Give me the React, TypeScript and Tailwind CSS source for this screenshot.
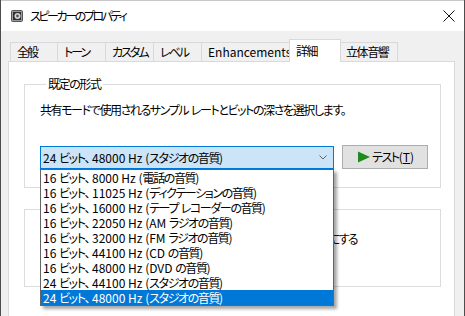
import React from "react";

const options = [
  "16 ビット、8000 Hz (電話の音質)",
  "16 ビット、11025 Hz (ディクテーションの音質)",
  "16 ビット、16000 Hz (テープ レコーダーの音質)",
  "16 ビット、22050 Hz (AM ラジオの音質)",
  "16 ビット、32000 Hz (FM ラジオの音質)",
  "16 ビット、44100 Hz (CD の音質)",
  "16 ビット、48000 Hz (DVD の音質)",
  "24 ビット、44100 Hz (スタジオの音質)",
  "24 ビット、48000 Hz (スタジオの音質)",
];

const tabs = [
  { label: "全般", w: "w-[47px]" },
  { label: "トーン", w: "w-[48px]" },
  { label: "カスタム", w: "w-[48px]" },
  { label: "レベル", w: "w-[48px]" },
  { label: "Enhancements", w: "w-[88px]" },
];

// Japanese runs are tightened, ASCII runs keep normal spacing
function T({ s, tight = "tracking-[-1.4px]" }: { s: string; tight?: string }) {
  const parts = s.split(/([\x20-\x7e]+|、)/).filter((p) => p !== "");
  return (
    <>
      {parts.map((p, i) => {
        if (p === "、") {
          return (
            <span key={i} className="tracking-[1.5px]">
              {p}
            </span>
          );
        }
        return /^[\x20-\x7e]+$/.test(p) ? (
          <span key={i} className="tracking-normal">
            {p}
          </span>
        ) : (
          <span key={i} className={tight}>
            {p}
          </span>
        );
      })}
    </>
  );
}

function Checkbox({ label }: { label: string }) {
  return (
    <div className="flex items-center h-[16px] gap-[4px]">
      <span className="w-[13px] h-[13px] border border-[#333333] bg-white shrink-0" />
      <span className="whitespace-nowrap">
        <T s={label} tight="tracking-[-1.6px]" />
      </span>
    </div>
  );
}

export default function App() {
  return (
    <div className="relative w-[465px] h-[316px] overflow-hidden bg-[#f0f0f0] border-x border-[#4d4d4d] text-[12px] leading-[16px] text-black font-['Noto_Sans_CJK_JP',sans-serif] [font-feature-settings:'palt']">
      {/* Title bar */}
      <div className="h-[31px] bg-white border-t border-[#c8c8c8] flex items-center">
        <svg width="12" height="12" viewBox="0 0 12 12" className="ml-[10px]">
          <rect x="0.5" y="0.5" width="11" height="11" rx="1" fill="#9a9a9a" stroke="#555" />
          <rect x="2" y="2" width="8" height="8" fill="#2e2e2e" />
          <circle cx="6.5" cy="6" r="3" fill="#d8d8d8" />
          <circle cx="6.5" cy="6" r="1.4" fill="#555" />
        </svg>
        <span className="ml-[7px]">
          <T s="スピーカーのプロパティ" tight="tracking-[-2.4px]" />
        </span>
        <svg width="12" height="12" viewBox="0 0 12 12" className="ml-auto mr-[9px]">
          <path d="M0.5 0.5L11.5 11.5M11.5 0.5L0.5 11.5" stroke="#111" strokeWidth="1" />
        </svg>
      </div>

      {/* Tabs */}
      <div className="mt-[8px] h-[22px] flex items-end pl-[9px]">
        {tabs.map((t) => (
          <div
            key={t.label}
            className={`${t.w} h-[19px] border-t border-l border-[#d9d9d9] bg-[#f0f0f0] pl-[6px] flex items-center whitespace-nowrap`}
          >
            <T s={t.label} tight="tracking-[-2px]" />
          </div>
        ))}
        <div className="relative z-10 w-[52px] h-[23px] -mb-px border-t border-x border-[#d9d9d9] bg-white pl-[6px] flex items-start pt-[3px]">
          <T s="詳細" />
        </div>
        <div className="w-[57px] h-[19px] border-t border-r border-[#d9d9d9] bg-[#f0f0f0] pl-[5px] flex items-center whitespace-nowrap">
          <T s="立体音響" />
        </div>
      </div>

      {/* Tab page */}
      <div className="ml-[7px] w-[447px] h-[300px] border border-[#d9d9d9] bg-white">
        <fieldset className="mt-[14px] ml-[15px] w-[417px] border border-[#dcdcdc] pl-[15px] pt-[10px] pb-[18px]">
          <legend className="ml-[6px] px-[2px] leading-[16px]">
            <T s="既定の形式" />
          </legend>
          <div className="whitespace-nowrap">
            <T s="共有モードで使用されるサンプル レートとビットの深さを選択します。" />
          </div>
          <div className="mt-[27px] flex items-start">
            <div className="mt-px w-[294px] h-[23px] border border-[#0078d7] bg-[#cce4f7] flex items-center pl-[2px] pr-[6px]">
              <span className="whitespace-nowrap">
                <T s="24 ビット、48000 Hz (スタジオの音質)" />
              </span>
              <svg width="8" height="5" viewBox="0 0 8 5" className="ml-auto">
                <path d="M0.5 0.5L4 4L7.5 0.5" fill="none" stroke="#606060" />
              </svg>
            </div>
            <div className="ml-[8px] w-[86px] h-[24px] border border-[#adadad] bg-[#e1e1e1] flex items-center pl-[15px]">
              <svg width="12" height="12" viewBox="0 0 12 12">
                <path d="M0 0.5L12 6L0 11.5Z" fill="#1f8a1f" />
              </svg>
              <span className="ml-[2px] whitespace-nowrap">
                <T s="テスト" />(<span className="underline">T</span>)
              </span>
            </div>
          </div>
        </fieldset>

        <fieldset className="mt-[13px] ml-[15px] w-[417px] border border-[#dcdcdc] pl-[15px] pt-[14px] pb-[16px]">
          <legend className="ml-[6px] px-[2px] leading-[16px]">
            <T s="排他モード" />
          </legend>
          <Checkbox label="アプリケーションによりこのデバイスを排他的に制御できるようにする" />
          <div className="mt-[7px]">
            <Checkbox label="排他モードのアプリケーションを優先する" />
          </div>
        </fieldset>
      </div>

      {/* Open dropdown list */}
      <div className="absolute left-[39px] top-[169px] w-[294px] h-[137px] border border-[#646464] bg-white shadow-[3px_3px_3px_rgba(0,0,0,0.35)]">
        {options.map((o, i) => (
          <div
            key={o}
            className={`h-[15px] leading-[15px] pl-[2px] whitespace-nowrap ${
              i === options.length - 1 ? "bg-[#0078d7] text-white" : ""
            }`}
          >
            <T s={o} />
          </div>
        ))}
      </div>
    </div>
  );
}
